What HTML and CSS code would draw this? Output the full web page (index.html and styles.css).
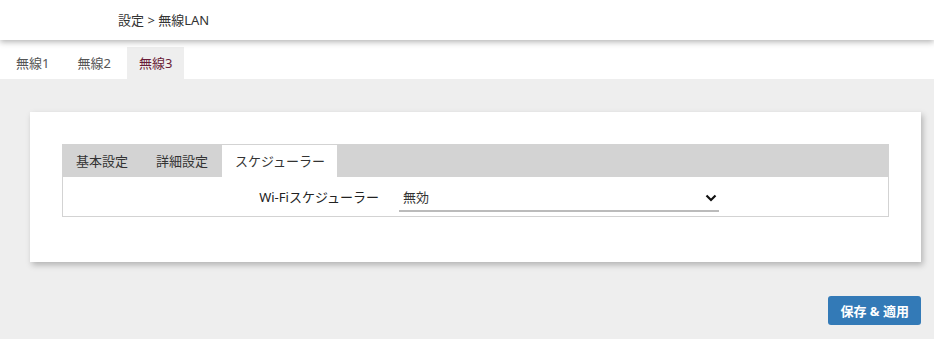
FILE: index.html
```html
<!DOCTYPE html>
<html>
  <head>
    <meta charset="UTF-8"/>
    <title>無線LAN</title>
    <link rel="stylesheet" href="styles.css">
  </head>
  <body>
    <header class="topbar">設定 &gt; 無線LAN</header>

    <nav class="radio-tabs">
      <a class="radio-tab">無線1</a>
      <a class="radio-tab">無線2</a>
      <a class="radio-tab active">無線3</a>
    </nav>

    <article class="card">
      <div class="sub-tabs">
        <a class="sub-tab">基本設定</a>
        <a class="sub-tab">詳細設定</a>
        <a class="sub-tab active">スケジューラー</a>
      </div>
      <section class="panel">
        <div class="field">
          <label class="field-label" for="sched">Wi-Fiスケジューラー</label>
          <div class="select-wrap">
            <select id="sched" class="select">
              <option>無効</option>
              <option>有効</option>
            </select>
            <svg class="chevron" width="12" height="8" viewBox="0 0 12 8">
              <path d="M1.5 1.5 L6 6 L10.5 1.5" fill="none" stroke="#111" stroke-width="2.2"/>
            </svg>
          </div>
        </div>
      </section>
    </article>

    <div class="actions">
      <button class="btn-primary">保存 &amp; 適用</button>
    </div>
  </body>
</html>
```

FILE: styles.css
```css
html, body { padding: 0; margin: 0; }
body {
    background: #EEE;
    font-family: "Noto Sans", "Noto Sans CJK JP", sans-serif;
    font-size: 13px;
    color: #333;
}
.topbar {
    position: relative;
    z-index: 2;
    height: 40px;
    line-height: 40px;
    padding-left: 118px;
    background: #FFF;
    box-shadow: 0 2px 6px rgba(0, 0, 0, 0.3);
}
.radio-tabs {
    display: flex;
    height: 32px;
    padding-top: 7px;
    background: #FFF;
}
.radio-tab {
    margin-left: 4px;
    padding: 0 12px;
    line-height: 32px;
    font-size: 13px;
    color: #555;
}
.radio-tab.active {
    background: #EEE;
    color: #6A1B38;
}

.card {
    margin: 33px 13px 0 30px;
    padding: 32px 32px 45px;
    background: #FFF;
    box-shadow: 2px 3px 6px rgba(0, 0, 0, 0.25);
}
.sub-tabs {
    display: flex;
    height: 33px;
    background: #D3D3D3;
}
.sub-tab {
    padding: 0 14px;
    line-height: 32px;
    margin-top: 1px;
    color: #333;
}
.sub-tab.active {
    background: #FFF;
    padding: 0 12px 0 13px;
}
.panel {
    border: 1px solid #D3D3D3;
    border-top: 0;
    height: 39px;
}
.field {
    display: flex;
    align-items: center;
    height: 39px;
}
.field-label {
    width: 330px;
    box-sizing: border-box;
    padding-right: 14px;
    text-align: right;
    color: #222;
}
.select-wrap {
    position: relative;
    margin-left: 6px;
    margin-top: 3px;
}
.select {
    appearance: none;
    -webkit-appearance: none;
    width: 320px;
    height: 27px;
    padding: 0 4px;
    border: 0;
    border-bottom: 2px solid #BBB;
    background: transparent;
    font: inherit;
    color: #333;
    outline: none;
}
.chevron {
    position: absolute;
    right: 2px;
    top: 9px;
    pointer-events: none;
}

.actions {
    display: flex;
    justify-content: flex-end;
    margin: 34px 13px 0 0;
}
.btn-primary {
    height: 29px;
    padding: 0 12px;
    border: 0;
    border-radius: 3px;
    background: #337AB7;
    color: #FFF;
    font: inherit;
    font-weight: bold;
}
```
